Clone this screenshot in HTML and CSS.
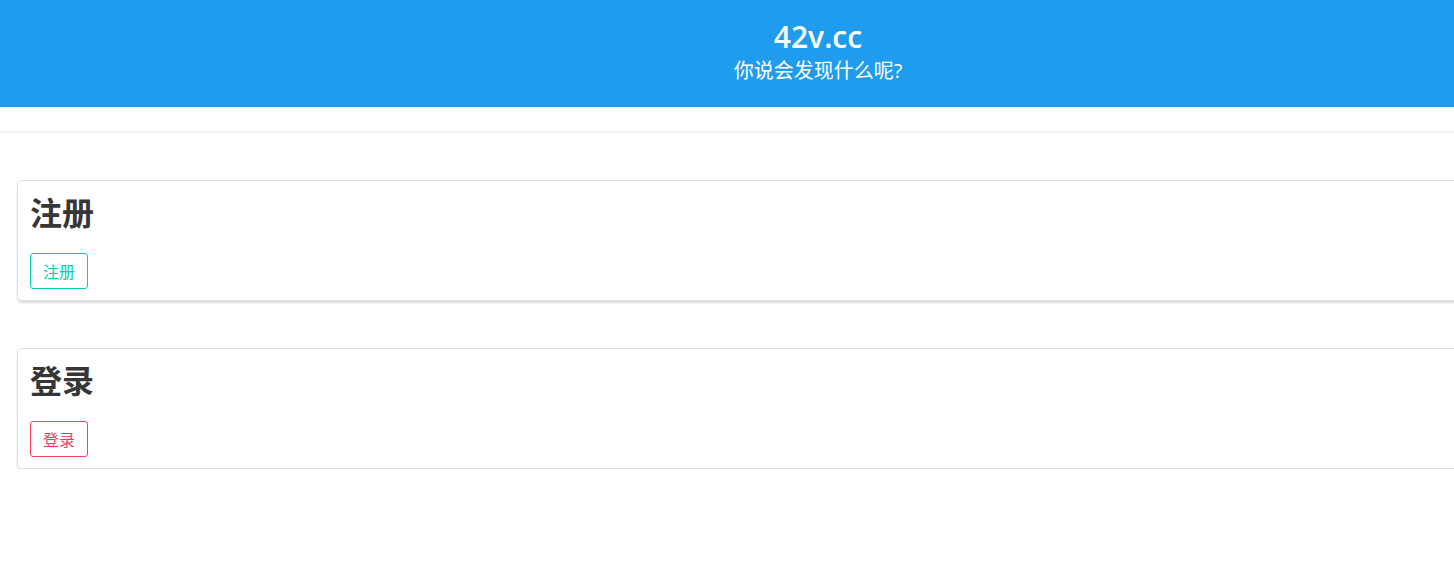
FILE: index.html
```html
<!DOCTYPE html>
<html lang="zh">
<head>
<meta charset="utf-8">
<title>42v.cc</title>
<link rel="stylesheet" href="styles.css">
</head>
<body>
<div class="page">
  <header class="hero">
    <h1 class="title">42v.cc</h1>
    <p class="subtitle">你说会发现什么呢?</p>
  </header>
  <div class="band"></div>
  <main class="content">
    <section class="card">
      <h2 class="card-title">注册</h2>
      <a class="btn btn-primary" href="#">注册</a>
    </section>
    <section class="card">
      <h2 class="card-title">登录</h2>
      <a class="btn btn-danger" href="#">登录</a>
    </section>
  </main>
</div>
</body>
</html>
```

FILE: styles.css
```css
html, body {
  margin: 0;
  padding: 0;
  overflow: hidden;
  background: #fff;
}
body {
  font-family: "Open Sans", "Noto Sans CJK SC", sans-serif;
  color: #4a4a4a;
}
.page {
  width: 1636px;
}
.hero {
  background: #209cee;
  height: 107px;
  box-sizing: border-box;
  display: flex;
  flex-direction: column;
  align-items: center;
  padding-top: 18px;
  color: #fff;
}
.title {
  margin: 0;
  font-size: 30px;
  font-weight: 600;
  line-height: 38px;
}
.subtitle {
  margin: 0;
  font-size: 20px;
  line-height: 30px;
  font-weight: 400;
}
.band {
  height: 24px;
  border-bottom: 2px solid #f3f3f3;
}
.content {
  display: flex;
  flex-direction: column;
  gap: 47px;
  padding: 47px 17px 0 17px;
}
.card {
  border: 1px solid #e1e1e1;
  border-radius: 5px;
  box-shadow: 0 2px 2px rgba(10, 10, 10, 0.14);
  padding: 12px 12px 11px 12px;
  display: flex;
  flex-direction: column;
  align-items: flex-start;
}
.card-title {
  margin: 0 0 24px 0;
  font-family: "Noto Sans CJK SC", sans-serif;
  font-size: 32px;
  line-height: 36px;
  font-weight: 700;
  color: #363636;
}
.btn {
  display: inline-flex;
  align-items: center;
  justify-content: center;
  box-sizing: border-box;
  height: 36px;
  width: 58px;
  border: 1px solid;
  border-radius: 3px;
  font-family: "Noto Sans CJK SC", sans-serif;
  font-size: 16px;
  text-decoration: none;
  background: #fff;
}
.btn-primary {
  border-color: #00d1b2;
  color: #00d1b2;
}
.btn-danger {
  border-color: #ff3860;
  color: #ff3860;
}
```
